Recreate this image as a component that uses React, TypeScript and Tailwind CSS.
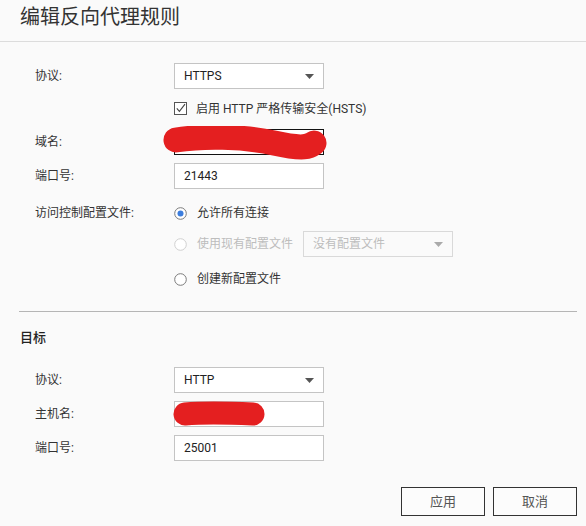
const Caret = ({ color = '#555' }: { color?: string }) => (
  <svg width="9" height="5" viewBox="0 0 9 5">
    <path d="M0 0h9L4.5 5z" fill={color} />
  </svg>
);

const Select = ({ value, disabled }: { value: string; disabled?: boolean }) => (
  <div
    className={
      disabled
        ? 'flex h-[26px] w-[150px] items-center justify-between border border-[#d9d9d9] bg-[#fafafa] pl-[9px] pr-[9px] text-[#bdbdbd]'
        : 'flex h-[26px] w-[150px] items-center justify-between border border-[#c4c4c4] bg-white pl-[9px] pr-[9px] text-[#222]'
    }
  >
    <span>{value}</span>
    <Caret color={disabled ? '#aaa' : '#555'} />
  </div>
);

const Input = ({ value, focused }: { value?: string; focused?: boolean }) => (
  <div
    className={
      focused
        ? 'flex h-[26px] w-[150px] items-center border border-[#111] bg-white pl-[9px] text-[#222]'
        : 'flex h-[26px] w-[150px] items-center border border-[#c4c4c4] bg-white pl-[9px] text-[#222]'
    }
  >
    {value}
  </div>
);

const Radio = ({ checked, disabled }: { checked?: boolean; disabled?: boolean }) => (
  <svg width="13" height="13" viewBox="0 0 13 13">
    <circle cx="6.5" cy="6.5" r="5.8" fill="#fff" stroke={disabled ? '#d0d0d0' : '#7a7a7a'} strokeWidth="1" />
    {checked && <circle cx="6.5" cy="6.5" r="3" fill="#3b7ddd" />}
  </svg>
);

const Row = ({ label, children, className = '' }: { label: string; children: React.ReactNode; className?: string }) => (
  <div className={`flex items-center pl-[35px] ${className}`}>
    <div className="w-[139px] text-[#333]">{label}</div>
    {children}
  </div>
);

// red marker scribbles that hide the host names
const Scribble = ({ d, w, sw }: { d: string; w: number; sw: number }) => (
  <svg className="pointer-events-none absolute left-[-12px] top-[-3px]" width={w} height="34" viewBox={`0 0 ${w} 34`}>
    <path d={d} fill="none" stroke="#e41f20" strokeWidth={sw} strokeLinecap="round" strokeLinejoin="round" />
  </svg>
);

export default function App() {
  return (
    <div className="h-[526px] w-[586px] overflow-hidden bg-[#fafafa] font-[Roboto,'Noto_Sans_CJK_SC',sans-serif] text-[12px] leading-[16px]">
      <div className="h-[42px] border-b border-[#dcdcdc] pl-[20px] pt-[5px] text-[20px] leading-[24px] text-[#333]">
        编辑反向代理规则
      </div>

      <Row label="协议:" className="mt-[21px]">
        <Select value="HTTPS" />
      </Row>
      <div className="flex h-[40px] items-center pb-[1px] pl-[174px] text-[#333]">
        <svg width="13" height="13" viewBox="0 0 13 13">
          <rect x="0.5" y="0.5" width="12" height="12" fill="#fff" stroke="#555" />
          <path d="M2.8 6.4l2.6 3L11 2.2" fill="none" stroke="#444" strokeWidth="1.1" />
        </svg>
        <span className="ml-[9px]">启用 HTTP 严格传输安全(HSTS)</span>
      </div>
      <Row label="域名:">
        <div className="relative">
          <Input focused />
          <Scribble w={168} sw={25} d="M14 14 C40 10, 80 10, 112 17 S148 20, 152 17" />
        </div>
      </Row>
      <Row label="端口号:" className="mt-[8px]">
        <Input value="21443" />
      </Row>

      <div className="mt-[11px] flex items-start pl-[35px]">
        <div className="w-[139px] leading-[26px] text-[#333]">访问控制配置文件:</div>
        <div className="flex flex-col">
          <div className="flex h-[26px] items-center text-[#333]">
            <Radio checked />
            <span className="ml-[10px]">允许所有连接</span>
          </div>
          <div className="mt-[5px] flex h-[26px] items-center text-[#bdbdbd]">
            <Radio disabled />
            <span className="ml-[10px] mr-[10px]">使用现有配置文件</span>
            <Select value="没有配置文件" disabled />
          </div>
          <div className="mt-[9px] flex h-[26px] items-center text-[#333]">
            <Radio />
            <span className="ml-[10px]">创建新配置文件</span>
          </div>
        </div>
      </div>

      <div className="ml-[19px] mr-[9px] mt-[19px] border-t border-[#b5b5b5]" />

      <div className="mt-[18px] pl-[20px] text-[13px] font-medium leading-[16px] text-[#222]">目标</div>

      <Row label="协议:" className="mt-[21px]">
        <Select value="HTTP" />
      </Row>
      <Row label="主机名:" className="mt-[8px]">
        <div className="relative">
          <Input />
          <Scribble w={112} sw={23} d="M23 16 C45 14, 70 15, 91 16" />
        </div>
      </Row>
      <Row label="端口号:" className="mt-[8px]">
        <Input value="25001" />
      </Row>

      <div className="mt-[26px] flex justify-end gap-[8px] pr-[9px]">
        <button className="h-[29px] w-[84px] border border-[#333] bg-[#fcfcfc] text-[13px] text-[#555]">应用</button>
        <button className="h-[29px] w-[84px] border border-[#333] bg-[#fcfcfc] text-[13px] text-[#555]">取消</button>
      </div>
    </div>
  );
}
